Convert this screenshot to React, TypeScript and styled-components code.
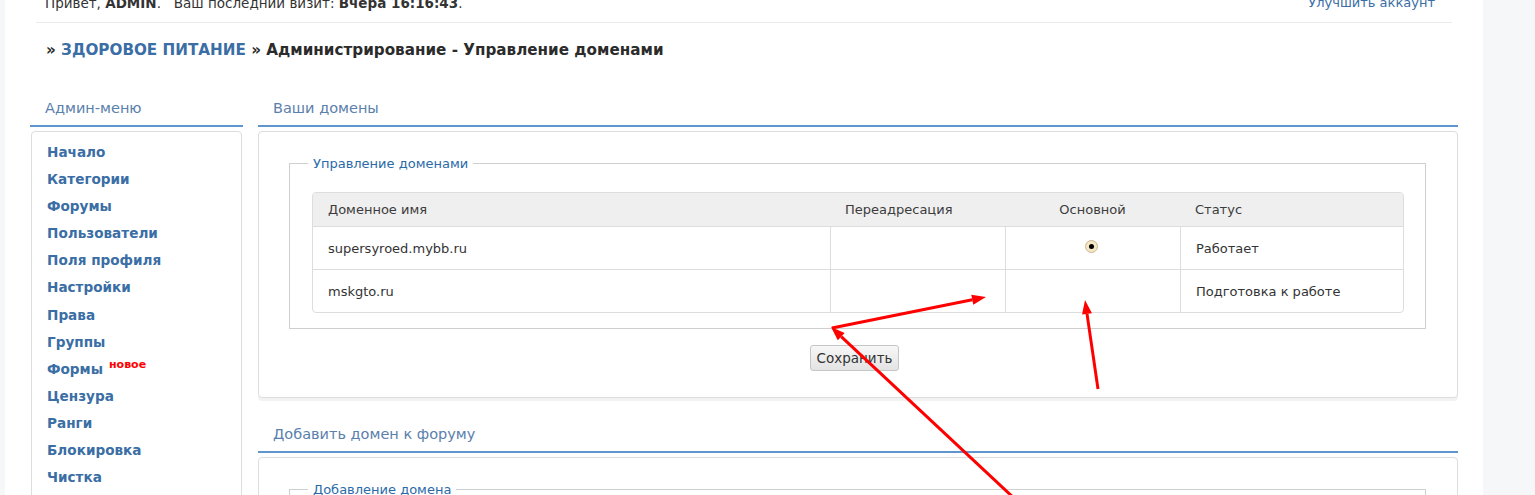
import React from "react";
import styled, { createGlobalStyle } from "styled-components";

const Global = createGlobalStyle`
  html, body { margin: 0; padding: 0; }
  body {
    background: #f6f7f9;
    font-family: "DejaVu Sans", Verdana, sans-serif;
    color: #333;
    overflow: hidden;
  }
`;

const Page = styled.div`
  position: relative;
  width: 1535px;
  height: 495px;
  overflow: hidden;
`;

const Sheet = styled.div`
  margin-left: 5px;
  width: 1478px;
  min-height: 495px;
  background: #fff;
`;

const TopBar = styled.div`
  margin: 0 31px;
  height: 23px;
  border-bottom: 1px solid #ebebeb;
  display: flex;
  justify-content: space-between;
  align-items: flex-start;
  padding: 0 17px 0 9px;
  box-sizing: border-box;
  font-size: 13.5px;
  line-height: 16px;
`;

const TopText = styled.div`
  margin-top: -5px;
  color: #333;
  white-space: pre;
  b { font-weight: bold; }
`;

const TopLink = styled.a`
  margin-top: -5px;
  color: #3a6ea5;
  text-decoration: none;
  font-size: 13px;
`;

const Crumbs = styled.div`
  padding: 18px 0 0 41px;
  height: 39px;
  box-sizing: border-box;
  font-weight: bold;
  font-size: 15.2px;
  line-height: 19px;
  color: #2b2b2b;
`;

const CrumbLink = styled.a`
  color: #3a6ea5;
  text-decoration: none;
`;

const Columns = styled.div`
  display: grid;
  grid-template-columns: 213px 1200px;
  column-gap: 15px;
  padding: 0 25px;
  margin-top: 35px;
`;

const SectionHead = styled.div`
  height: 30px;
  border-bottom: 2px solid #6096cf;
  box-sizing: border-box;
  padding-left: 15px;
  font-size: 14.5px;
  line-height: 22px;
  color: #5a80ac;
`;

const Box = styled.div`
  margin-top: 4px;
  border: 1px solid #dddddd;
  border-radius: 4px;
  background: #fff;
  box-shadow: 0 3px 0 #f2f2f2;
`;

const MenuBox = styled(Box)`
  margin-left: 1px;
  margin-right: 1px;
  padding: 7px 0 20px 15px;
  min-height: 400px;
`;

const MenuItem = styled.a`
  display: block;
  font-weight: bold;
  font-size: 13.6px;
  line-height: 27.1px;
  color: #3a6ea5;
  text-decoration: none;
`;

const NewBadge = styled.span`
  display: inline-block;
  position: relative;
  top: -6px;
  color: #ff0000;
  font-size: 11px;
  line-height: 11px;
  margin-left: 6px;
`;

const MainBox = styled(Box)<{ $bottom?: number }>`
  padding: 24px 31px ${(p) => p.$bottom ?? 26}px 30px;
  display: flex;
  flex-direction: column;
  align-items: center;
`;

const Section = styled.section<{ $gap?: number }>`
  margin-top: ${(p) => p.$gap ?? 0}px;
`;

const Fieldset = styled.fieldset`
  align-self: stretch;
  margin: 0;
  border: 1px solid #cfcfcf;
  padding: 21px 21px 15px 22px;
`;

const Legend = styled.legend`
  padding: 0 5px;
  margin-left: -4px;
  color: #2a6aa8;
  font-size: 13px;
`;

const Table = styled.table`
  width: 100%;
  border-collapse: separate;
  border-spacing: 0;
  border: 1px solid #dddddd;
  border-radius: 4px;
  overflow: hidden;
  font-size: 13px;
  color: #333;
`;

const Th = styled.th<{ $center?: boolean }>`
  background: #efefef;
  font-weight: normal;
  text-align: ${(p) => (p.$center ? "center" : "left")};
  height: 33px;
  padding: 0 15px;
  border-bottom: 1px solid #dddddd;
  color: #3c3c3c;
`;

const Td = styled.td<{ $center?: boolean; $first?: boolean; $last?: boolean }>`
  height: 42px;
  padding: 0 15px;
  text-align: ${(p) => (p.$center ? "center" : "left")};
  border-left: ${(p) => (p.$first ? "none" : "1px solid #dddddd")};
  border-bottom: ${(p) => (p.$last ? "none" : "1px solid #dddddd")};
`;

const Radio = styled.span`
  display: inline-block;
  width: 11px;
  height: 11px;
  border-radius: 50%;
  background: #f5e6c6;
  border: 1px solid #c9b892;
  position: relative;
  vertical-align: middle;
  margin-left: -4px;
  margin-top: -6px;
  &::after {
    content: "";
    position: absolute;
    left: 3px;
    top: 3px;
    width: 5px;
    height: 5px;
    border-radius: 50%;
    background: #000;
  }
`;

const SaveButton = styled.button`
  margin-top: 16px;
  height: 26px;
  padding: 0 6px;
  border: 1px solid #c6c6c6;
  border-radius: 3px;
  background: linear-gradient(#f7f7f7, #e3e3e3);
  font-family: "DejaVu Sans", Verdana, sans-serif;
  font-size: 13.5px;
  color: #333;
  margin-right: 6px;
`;

const Overlay = styled.svg`
  position: absolute;
  left: 0;
  top: 0;
  pointer-events: none;
`;

function Arrow({ x1, y1, x2, y2 }: { x1: number; y1: number; x2: number; y2: number }) {
  const dx = x2 - x1;
  const dy = y2 - y1;
  const len = Math.hypot(dx, dy);
  const ux = dx / len;
  const uy = dy / len;
  const hl = 14;
  const hw = 5;
  const bx = x2 - ux * hl;
  const by = y2 - uy * hl;
  const pts = `${x2},${y2} ${bx - uy * hw},${by + ux * hw} ${bx + uy * hw},${by - ux * hw}`;
  return (
    <g>
      <line x1={x1} y1={y1} x2={bx} y2={by} stroke="#ff0000" strokeWidth={3} />
      <polygon points={pts} fill="#ff0000" />
    </g>
  );
}

const menu = [
  "Начало",
  "Категории",
  "Форумы",
  "Пользователи",
  "Поля профиля",
  "Настройки",
  "Права",
  "Группы",
  "Формы",
  "Цензура",
  "Ранги",
  "Блокировка",
  "Чистка",
  "Реклама",
];

export default function App() {
  return (
    <Page>
      <Global />
      <Sheet>
        <TopBar>
          <TopText>
            Привет, <b>ADMIN</b>.   Ваш последний визит: <b>Вчера 16:16:43</b>.
          </TopText>
          <TopLink href="#">Улучшить аккаунт</TopLink>
        </TopBar>
        <Crumbs>
          » <CrumbLink href="#">ЗДОРОВОЕ ПИТАНИЕ</CrumbLink> » Администрирование - Управление доменами
        </Crumbs>
        <Columns>
          <aside>
            <SectionHead>Админ-меню</SectionHead>
            <MenuBox>
              {menu.map((m) => (
                <MenuItem key={m} href="#">
                  {m}
                  {m === "Формы" && <NewBadge>новое</NewBadge>}
                </MenuItem>
              ))}
            </MenuBox>
          </aside>
          <main>
            <Section>
              <SectionHead>Ваши домены</SectionHead>
              <MainBox>
                <Fieldset>
                  <Legend>Управление доменами</Legend>
                  <Table>
                    <colgroup>
                      <col style={{ width: 517 }} />
                      <col style={{ width: 175 }} />
                      <col style={{ width: 175 }} />
                      <col />
                    </colgroup>
                    <thead>
                      <tr>
                        <Th>Доменное имя</Th>
                        <Th>Переадресация</Th>
                        <Th $center>Основной</Th>
                        <Th>Статус</Th>
                      </tr>
                    </thead>
                    <tbody>
                      <tr>
                        <Td $first>supersyroed.mybb.ru</Td>
                        <Td />
                        <Td $center>
                          <Radio />
                        </Td>
                        <Td>Работает</Td>
                      </tr>
                      <tr>
                        <Td $first $last>mskgto.ru</Td>
                        <Td $last />
                        <Td $last $center />
                        <Td $last>Подготовка к работе</Td>
                      </tr>
                    </tbody>
                  </Table>
                </Fieldset>
                <SaveButton>Сохранить</SaveButton>
              </MainBox>
            </Section>
            <Section $gap={25}>
              <SectionHead>Добавить домен к форуму</SectionHead>
              <MainBox>
                <Fieldset>
                  <Legend>Добавление домена</Legend>
                  <Table>
                    <tbody>
                      <tr>
                        <Td $first $last>Домен</Td>
                      </tr>
                    </tbody>
                  </Table>
                </Fieldset>
              </MainBox>
            </Section>
          </main>
        </Columns>
      </Sheet>
      <Overlay width={1535} height={495} viewBox="0 0 1535 495">
        <Arrow x1={832} y1={328} x2={986} y2={297} />
        <Arrow x1={1098} y1={389} x2={1085} y2={300} />
        <Arrow x1={1016} y1={500} x2={831} y2={327} />
      </Overlay>
    </Page>
  );
}
